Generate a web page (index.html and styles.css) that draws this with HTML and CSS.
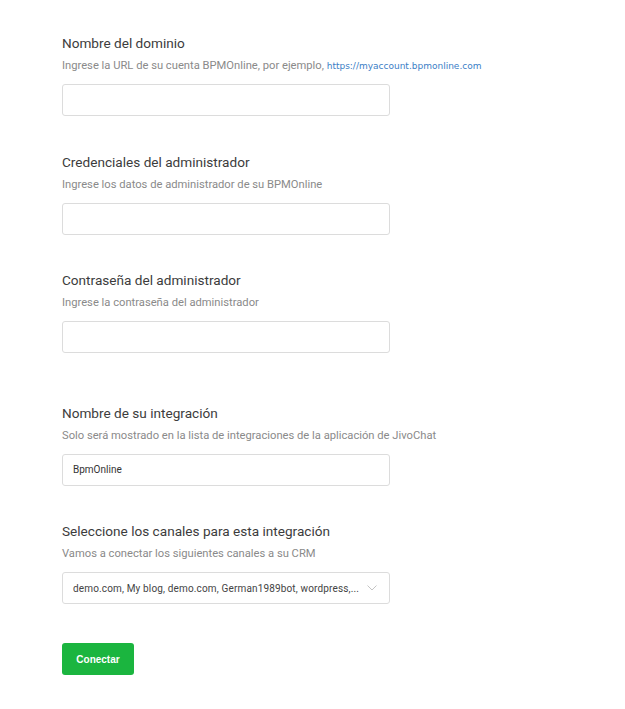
FILE: index.html
```html
<!DOCTYPE html>
<html lang="es">
<head>
    <meta charset="UTF-8">
    <title>Integración BPMOnline</title>
    <link rel="stylesheet" href="styles.css">
</head>
<body>
    <div class="form">
        <div class="form-group">
            <div class="title">Nombre del dominio</div>
            <div class="desc">Ingrese la URL de su cuenta BPMOnline, por ejemplo, <a class="link" href="#">https://myaccount.bpmonline.com</a></div>
            <input type="text" class="field">
        </div>

        <div class="form-group">
            <div class="title">Credenciales del administrador</div>
            <div class="desc">Ingrese los datos de administrador de su BPMOnline</div>
            <input type="text" class="field">
        </div>

        <div class="form-group extra">
            <div class="title">Contraseña del administrador</div>
            <div class="desc">Ingrese la contraseña del administrador</div>
            <input type="password" class="field">
        </div>

        <div class="form-group">
            <div class="title">Nombre de su integración</div>
            <div class="desc">Solo será mostrado en la lista de integraciones de la aplicación de JivoChat</div>
            <input type="text" class="field" value="BpmOnline">
        </div>

        <div class="form-group">
            <div class="title">Seleccione los canales para esta integración</div>
            <div class="desc">Vamos a conectar los siguientes canales a su CRM</div>
            <div class="field select">
                <span class="select-text">demo.com, My blog, demo.com, German1989bot, wordpress,...</span>
                <svg class="chevron" width="10" height="6" viewBox="0 0 10 6"><path d="M0.5 0.5 L5 5 L9.5 0.5" fill="none" stroke="#c4c4c4" stroke-width="1"/></svg>
            </div>
        </div>

        <button class="btn">Conectar</button>
    </div>
</body>
</html>
```

FILE: styles.css
```css
body {
    margin: 0;
    background-color: #fff;
    font-family: Roboto, "Noto Sans", sans-serif;
    color: #333;
}
.form {
    padding: 33px 0 0 62px;
}
.form-group {
    margin-bottom: 35.5px;
}
.form-group.extra {
    margin-bottom: 49.5px;
}
.title {
    font-size: 13.6px;
    line-height: 20px;
    color: #3c3c3c;
}
.desc {
    margin-top: 5px;
    font-size: 11.2px;
    line-height: 16px;
    color: #8a8a8a;
}
.link {
    color: #3b7ec6;
    text-decoration: none;
    font-family: "DejaVu Sans", Verdana, sans-serif;
    font-size: 9px;
}
.field {
    display: block;
    box-sizing: border-box;
    width: 328px;
    height: 32px;
    margin-top: 10px;
    padding: 0 10px;
    border: 1px solid #dcdcdc;
    border-radius: 3px;
    background-color: #fff;
    font-family: Roboto, "Noto Sans", sans-serif;
    font-size: 10px;
    color: #333;
    outline: none;
}
.select {
    display: flex;
    align-items: center;
    justify-content: space-between;
    padding-right: 12px;
}
.select-text {
    font-size: 10px;
    letter-spacing: 0.15px;
    color: #444;
    white-space: nowrap;
}
.chevron {
    flex-shrink: 0;
}
.btn {
    display: block;
    margin-top: 39px;
    width: 72px;
    height: 32px;
    border: none;
    border-radius: 3px;
    background-color: #1bb53f;
    color: #fff;
    font-family: "Liberation Sans", Arial, sans-serif;
    font-weight: bold;
    font-size: 10px;
    cursor: pointer;
}
```
